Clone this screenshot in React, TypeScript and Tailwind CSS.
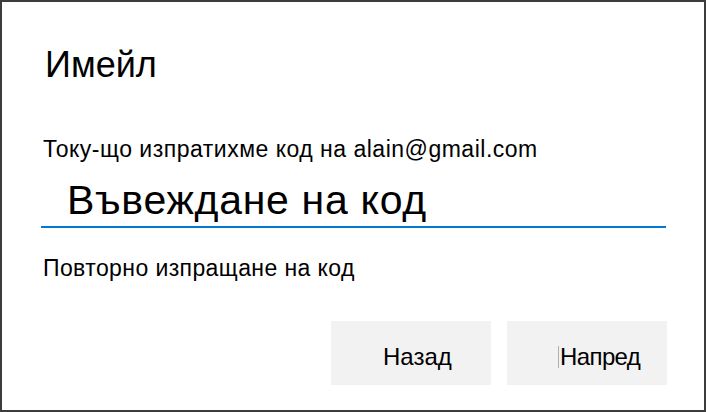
export default function App() {
  return (
    <div
      className="box-border flex h-[412px] w-[706px] flex-col border-2 border-[#3c3c3c] bg-white text-black"
      style={{ fontFamily: '"Liberation Sans", Arial, sans-serif' }}
    >
      <h1 className="ml-[43px] mt-[43px] text-[36px] leading-[40px] font-normal">Имейл</h1>

      <p className="ml-[41px] mt-[52px] text-[23px] leading-[24px] tracking-[0.5px]">
        Току-що изпратихме код на alain@gmail.com
      </p>

      <div className="ml-[39px] mr-[38px] mt-[17px] border-b-2 border-[#0078d4] pb-[4px] pl-[26px]">
        <span className="block text-[41px] leading-[44px] tracking-[0.7px]">Въвеждане на код</span>
      </div>

      <p className="ml-[41px] mt-[28px] text-[23px] leading-[24px] tracking-[0.4px]">
        Повторно изпращане на код
      </p>

      <div className="mt-auto mb-[25px] mr-[37px] flex justify-end gap-[16px]">
        <button className="flex h-[64px] w-[160px] items-center bg-[#f2f2f2] pl-[52px] pt-[8px] text-[24px] leading-[28px]">
          Назад
        </button>
        <button className="flex h-[64px] w-[160px] items-center bg-[#f2f2f2] pl-[51px] pt-[8px] text-[24px] leading-[28px] tracking-[-0.6px]">
          <span className="mr-[1px] inline-block h-[22px] w-px bg-[#b0b0b0]" />
          Напред
        </button>
      </div>
    </div>
  );
}
